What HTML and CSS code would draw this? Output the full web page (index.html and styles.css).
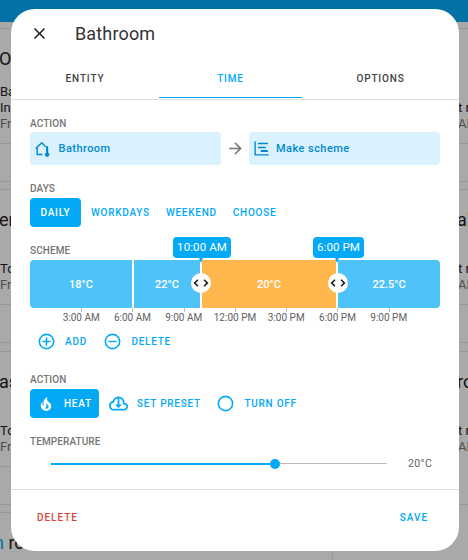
FILE: index.html
```html
<!DOCTYPE html>
<html lang="en">
<head>
<meta charset="utf-8">
<title>Bathroom</title>
<link rel="stylesheet" href="styles.css">
</head>
<body>
<div class="page">
  <div class="topbar"></div>
  <div class="columns">
    <div class="col">
      <section class="card"><div class="card-body"><h2>Oc</h2><p class="l1">Ba</p><p class="l2">In</p><p class="l3">Fr</p></div><div class="card-foot"></div></section>
      <section class="card"><div class="card-body"><h2>er</h2><p class="l1 blank">&nbsp;</p><p class="l2">To</p><p class="l3">Fr</p></div><div class="card-foot"></div></section>
      <section class="card"><div class="card-body"><h2>aš</h2><p class="l1 blank">&nbsp;</p><p class="l2">To</p><p class="l3">Fr</p></div><div class="card-foot"></div></section>
      <section class="card"><div class="card-body"><h2 class="last-head"><span class="mark">n</span> room</h2></div></section>
    </div>
    <div class="col col-right">
      <section class="card"><div class="card-body"><h2>&nbsp;</h2><p class="l1 blank">&nbsp;</p><p class="l2">t r</p><p class="l3">AM</p></div><div class="card-foot"></div></section>
      <section class="card"><div class="card-body"><h2>al</h2><p class="l1 blank">&nbsp;</p><p class="l2">t r</p><p class="l3">AM</p></div><div class="card-foot"></div></section>
      <section class="card"><div class="card-body"><h2>ro</h2><p class="l1 blank">&nbsp;</p><p class="l2">t r</p><p class="l3">AM</p></div><div class="card-foot"></div></section>
    </div>
  </div>
</div>
<div class="scrim"></div>

<main class="dialog">
  <header class="dialog-head">
    <svg class="close" viewBox="0 0 24 24"><path d="M19,6.41L17.59,5L12,10.59L6.41,5L5,6.41L10.59,12L5,17.59L6.41,19L12,13.41L17.59,19L19,17.59L13.41,12L19,6.41Z"/></svg>
    <h1>Bathroom</h1>
  </header>
  <nav class="tabs">
    <div class="tab">ENTITY</div>
    <div class="tab tab-active"><span>TIME</span></div>
    <div class="tab">OPTIONS</div>
  </nav>
  <div class="content">
    <div class="label label-action">ACTION</div>
    <div class="summary">
      <div class="chip">
        <svg class="chip-icon" viewBox="0 0 24 24"><path class="stroke" d="M2.5 12 11 4 16.5 9.5M4.5 11v9.5h7.5"/><path d="M17 10a1.5 1.5 0 0 1 3 0v8a3 3 0 1 1-3 0z"/></svg>
        <span>Bathroom</span>
      </div>
      <svg class="arrow" viewBox="0 0 24 24"><path d="M4,11V13H16L10.5,18.5L11.92,19.92L19.84,12L11.92,4.08L10.5,5.5L16,11H4Z"/></svg>
      <div class="chip chip-scheme">
        <svg class="chip-icon" viewBox="0 0 24 24"><path d="M2,2H4V20H22V22H2V2M7,4H21V6H7V4M7,9.5H18V11.5H7V9.5M11,14H21V17H11V14Z"/></svg>
        <span>Make scheme</span>
      </div>
    </div>

    <div class="label label-days">DAYS</div>
    <div class="btn-row">
      <button class="btn btn-on btn-daily">DAILY</button>
      <button class="btn btn-text">WORKDAYS</button>
      <button class="btn btn-text">WEEKEND</button>
      <button class="btn btn-text">CHOOSE</button>
    </div>

    <div class="label label-scheme">SCHEME</div>
    <div class="timeline">
      <div class="bar">
        <div class="seg seg-a">18°C</div>
        <div class="seg seg-b">22°C</div>
        <div class="seg seg-c">20°C</div>
        <div class="seg seg-d">22.5°C</div>
      </div>
      <div class="pin pin-1">
        <div class="tip">10:00 AM</div>
        <div class="knob"><svg viewBox="0 0 24 24"><path d="M18.17,12L15,8.83L16.41,7.41L21,12L16.41,16.59L15,15.17L18.17,12M5.83,12L9,15.17L7.59,16.59L3,12L7.59,7.41L9,8.83L5.83,12Z"/></svg></div>
      </div>
      <div class="pin pin-2">
        <div class="tip">6:00 PM</div>
        <div class="knob"><svg viewBox="0 0 24 24"><path d="M18.17,12L15,8.83L16.41,7.41L21,12L16.41,16.59L15,15.17L18.17,12M5.83,12L9,15.17L7.59,16.59L3,12L7.59,7.41L9,8.83L5.83,12Z"/></svg></div>
      </div>
    </div>
    <div class="axis">
      <span>3:00 AM</span><span>6:00 AM</span><span>9:00 AM</span><span>12:00 PM</span><span>3:00 PM</span><span>6:00 PM</span><span>9:00 PM</span>
    </div>
    <div class="edit-row">
      <button class="btn btn-icon">
        <svg viewBox="0 0 24 24"><path d="M12,20C7.59,20 4,16.41 4,12C4,7.59 7.59,4 12,4C16.41,4 20,7.59 20,12C20,16.41 16.41,20 12,20M12,2A10,10 0 0,0 2,12A10,10 0 0,0 12,22A10,10 0 0,0 22,12A10,10 0 0,0 12,2M13,7H11V11H7V13H11V17H13V13H17V11H13V7Z"/></svg>
        ADD
      </button>
      <button class="btn btn-icon">
        <svg viewBox="0 0 24 24"><path d="M12,20C7.59,20 4,16.41 4,12C4,7.59 7.59,4 12,4C16.41,4 20,7.59 20,12C20,16.41 16.41,20 12,20M12,2A10,10 0 0,0 2,12A10,10 0 0,0 12,22A10,10 0 0,0 22,12A10,10 0 0,0 12,2M7,13H17V11H7V13Z"/></svg>
        DELETE
      </button>
    </div>

    <div class="label label-act2">ACTION</div>
    <div class="btn-row action-row">
      <button class="btn btn-on btn-heat">
        <svg viewBox="0 0 24 24"><path d="M17.66 11.2C17.43 10.9 17.15 10.64 16.89 10.38C16.22 9.78 15.46 9.35 14.82 8.72C13.33 7.26 13 4.85 13.95 3C13 3.23 12.17 3.75 11.46 4.32C8.87 6.4 7.85 10.07 9.07 13.22C9.11 13.32 9.15 13.42 9.15 13.55C9.15 13.77 9 13.97 8.8 14.05C8.57 14.15 8.33 14.09 8.14 13.93C8.08 13.88 8.04 13.83 8 13.76C6.87 12.33 6.69 10.28 7.45 8.64C5.78 10 4.87 12.3 5 14.47C5.06 14.97 5.12 15.47 5.29 15.97C5.43 16.57 5.7 17.17 6 17.7C7.08 19.43 8.95 20.67 10.96 20.92C13.1 21.19 15.39 20.8 17.03 19.32C18.86 17.66 19.5 15 18.56 12.72L18.43 12.46C18.22 12 17.66 11.2 17.66 11.2M14.5 17.5C14.22 17.74 13.76 18 13.4 18.1C12.28 18.5 11.16 17.94 10.5 17.28C11.69 17 12.4 16.12 12.61 15.23C12.78 14.43 12.46 13.77 12.33 13C12.21 12.26 12.23 11.63 12.5 10.94C12.69 11.32 12.89 11.7 13.13 12C13.9 13 15.11 13.44 15.37 14.8C15.41 14.94 15.43 15.08 15.43 15.23C15.46 16.05 15.1 16.95 14.5 17.5H14.5Z"/></svg>
        HEAT
      </button>
      <button class="btn btn-icon btn-preset">
        <svg viewBox="0 0 24 24"><path d="M6.5 20Q4.22 20 2.61 18.43 1 16.85 1 14.58 1 12.63 2.17 11.1 3.35 9.57 5.25 9.15 5.88 6.85 7.75 5.43 9.63 4 12 4 14.93 4 16.96 6.04 19 8.07 19 11 20.73 11.2 21.86 12.5 23 13.78 23 15.5 23 17.38 21.69 18.69 20.38 20 18.5 20M6.5 18H18.5Q19.55 18 20.27 17.27 21 16.55 21 15.5 21 14.45 20.27 13.73 19.55 13 18.5 13H17V11Q17 8.93 15.54 7.46 14.08 6 12 6 9.93 6 8.46 7.46 7 8.93 7 11H6.5Q5.05 11 4.03 12.03 3 13.05 3 14.5 3 15.95 4.03 17 5.05 18 6.5 18M12 17 8 13H11V5H13V13H16Z"/></svg>
        SET PRESET
      </button>
      <button class="btn btn-icon btn-off">
        <svg viewBox="0 0 24 24"><path d="M12,20A8,8 0 0,1 4,12A8,8 0 0,1 12,4A8,8 0 0,1 20,12A8,8 0 0,1 12,20M12,2A10,10 0 0,0 2,12A10,10 0 0,0 12,22A10,10 0 0,0 22,12A10,10 0 0,0 12,2Z"/></svg>
        TURN OFF
      </button>
    </div>

    <div class="label label-temp">TEMPERATURE</div>
    <div class="slider-row">
      <div class="slider">
        <div class="slider-fill"></div>
        <div class="slider-thumb"></div>
        <div class="slider-rest"></div>
      </div>
      <div class="slider-value">20°C</div>
    </div>
  </div>
  <footer class="dialog-foot">
    <button class="foot-btn foot-del">DELETE</button>
    <button class="foot-btn foot-save">SAVE</button>
  </footer>
</main>
</body>
</html>
```
FILE: styles.css
```css
* { box-sizing: border-box; }
html, body { margin: 0; padding: 0; height: 100%; overflow: hidden; }
body { font-family: Roboto, "Liberation Sans", sans-serif; position: relative; width: 468px; height: 560px; background: #fafafa; color: #212121; }

/* page behind the dialog */
.page { width: 468px; height: 560px; overflow: hidden; }
.topbar { height: 22px; background: #03a9f4; }
.columns { display: grid; grid-template-columns: 333px 1fr; column-gap: 1px; background: #fafafa; padding-top: 6px; }
.col { display: flex; flex-direction: column; gap: 7.4px; }
.col-right { padding-left: 124px; width: 200px; }
.card { border-top: 1px solid #e0e0e0; }
.col:first-child .card:last-child { border-right: 1px solid #e0e0e0; height: 60px; }
.card-body { height: 115px; white-space: nowrap; overflow: hidden; border-bottom: 1px solid #e0e0e0; }
.card:last-child .card-body { border-bottom: 0; }
.card-body h2 { margin: 16px 0 11px -1px; font-size: 18px; line-height: 28px; font-weight: 400; }
.card-body .last-head { margin-left: -6px; }
.card-body p { margin: 0; font-size: 13px; line-height: 16px; }
.card-body .l3 { color: #727272; }
.card-foot { height: 38px; border-bottom: 1px solid #e0e0e0; }
.mark { color: #03a9f4; }
.scrim { position: absolute; inset: 0; background: rgba(0, 0, 0, .32); }

/* dialog */
.dialog { position: absolute; left: 11px; top: 9px; width: 448px; height: 542px; background: #fff; border-radius: 24px; display: flex; flex-direction: column; overflow: hidden; }
.dialog-head { display: flex; align-items: center; height: 48px; padding: 1px 0 0 18.5px; flex: none; }
.close { width: 19px; height: 19px; fill: #212121; flex: none; }
.dialog-head h1 { margin: 0 0 0 26.5px; font-size: 18px; font-weight: 400; line-height: 24px; letter-spacing: .15px; color: #333; }

.tabs { display: grid; grid-template-columns: 148px 143px 1fr; height: 43px; border-bottom: 1px solid #e0e0e0; flex: none; }
.tab { display: flex; justify-content: center; align-items: center; height: 42px; padding-top: 1px; font-size: 10px; font-weight: 500; letter-spacing: .85px; color: #424242; position: relative; }
.tab-active { color: #03a9f4; }
.tab-active::after { content: ""; position: absolute; left: 0; right: 0; bottom: 1px; height: 1px; background: #03a9f4; }

.content { flex: 1; padding: 0 19px; min-height: 0; }
.label { font-size: 10px; line-height: 12px; font-weight: 500; color: #757575; letter-spacing: .1px; }
.label-action { margin-top: 18px; }
.summary { display: flex; align-items: center; margin-top: 2px; height: 33px; }
.chip { width: 191px; height: 33px; background: #d9f2fe; border-radius: 4px; display: flex; align-items: center; color: #0288d1; font-size: 11px; font-weight: 500; letter-spacing: .45px; padding: 0 0 0 4px; }
.chip span { margin: 0 0 1px 7.5px; }
.chip-scheme span { margin-left: 6px; }
.chip-icon { width: 17px; height: 17px; fill: #0288d1; flex: none; }
.stroke { fill: none; stroke: #0288d1; stroke-width: 2; }
.arrow { width: 19px; height: 19px; margin: 0 4.5px; fill: #757575; flex: none; }

.btn { font-family: inherit; border: 0; background: none; padding: 0; font-size: 10px; font-weight: 500; letter-spacing: .75px; color: #03a9f4; display: flex; align-items: center; height: 29px; }
.btn svg { fill: currentColor; flex: none; }
.btn-row { display: flex; align-items: center; }
.label-days { margin-top: 18px; }
.label-days + .btn-row { margin-top: 3px; }
.btn-on { background: #03a9f4; color: #fff; border-radius: 4px; }
.btn-daily { width: 51px; justify-content: center; }
.btn-text { margin-left: 10px; margin-right: 6px; }
.btn-text + .btn-text { margin-left: 0; margin-right: 16px; }
.btn-text:nth-child(2) { margin-right: 16px; }

.label-scheme { margin-top: 18px; }
.timeline { position: relative; height: 48px; margin-top: 3px; }
.bar { display: flex; height: 48px; border-radius: 4px; overflow: hidden; }
.seg { display: flex; align-items: center; justify-content: center; height: 48px; color: #fff; font-size: 11px; font-weight: 500; background: #4fc3f7; }
.seg-a { width: 102px; margin-right: 2px; }
.seg-b { width: 66px; margin-right: 2px; }
.seg-c { width: 134px; margin-right: 2px; background: #ffb74d; }
.seg-d { width: 102px; }
.pin { position: absolute; top: -23px; width: 0; }
.pin-1 { left: 171px; }
.pin-2 { left: 307.5px; }
.tip { position: absolute; top: 0; left: -28px; height: 21px; width: 58px; border-radius: 4px; background: #03a9f4; color: #fff; font-size: 11.5px; font-weight: 400; letter-spacing: .1px; line-height: 21px; text-align: center; white-space: nowrap; }
.pin-2 .tip { left: -24.5px; width: 51px; }
.tip::after { content: ""; position: absolute; left: 28px; margin-left: -2.5px; top: 21px; border: 2.5px solid transparent; border-top: 5px solid #03a9f4; border-bottom: 0; }
.pin-2 .tip::after { left: 24.5px; }
.knob { position: absolute; left: -10px; top: 36px; width: 20px; height: 20px; border-radius: 50%; background: #fff; display: flex; align-items: center; justify-content: center; }
.knob svg { width: 20px; height: 20px; fill: #212121; flex: none; }

.axis { display: grid; grid-template-columns: repeat(7, 51.25px); margin-left: 25.6px; height: 21px; }
.axis span { position: relative; text-align: center; font-size: 10px; font-weight: 400; color: #616161; white-space: nowrap; line-height: 12px; padding-top: 4px; height: 21px; }
.axis span::before { content: ""; position: absolute; left: 50%; top: 0; width: 1px; height: 4px; background: #bdbdbd; }

.edit-row { display: flex; padding-left: 6.5px; height: 24px; }
.btn-icon svg { width: 19px; height: 19px; margin-right: 9.5px; }
.btn.btn-icon { height: 24px; }
.edit-row .btn-icon { margin-right: 16px; }

.label-act2 { margin-top: 21px; }
.action-row { margin-top: 3px; }
.btn-heat { width: 69px; padding-left: 7px; gap: 9px; }
.btn-heat svg { width: 18px; height: 18px; }
.btn-preset { margin-left: 8.5px; }
.btn-preset svg { width: 21px; height: 21px; margin-right: 8.5px; }
.btn-off { margin-left: 15px; }
.btn-off svg { width: 19px; height: 19px; margin-right: 9.5px; }

.label-temp { margin-top: 18px; }
.slider-row { display: flex; align-items: center; margin-top: 9.5px; height: 12px; padding-left: 21px; }
.slider { position: relative; display: flex; align-items: center; width: 336px; height: 12px; flex: none; }
.slider-fill { width: 224px; height: 2px; background: #03a9f4; }
.slider-thumb { width: 10px; height: 10px; border-radius: 50%; background: #03a9f4; margin: 0 -5px; position: relative; }
.slider-rest { flex: 1; height: 1px; background: #bdbdbd; }
.slider-value { margin-left: 21px; font-size: 10.5px; color: #616161; letter-spacing: .4px; }

.dialog-foot { flex: none; height: 62px; border-top: 1px solid #e0e0e0; display: flex; align-items: center; justify-content: space-between; padding: 0 31px 6px 26px; }
.foot-btn { border: 0; background: none; padding: 0; font-family: inherit; font-size: 10px; font-weight: 500; letter-spacing: .95px; }
.foot-del { color: #db4437; }
.foot-save { color: #03a9f4; }
```
